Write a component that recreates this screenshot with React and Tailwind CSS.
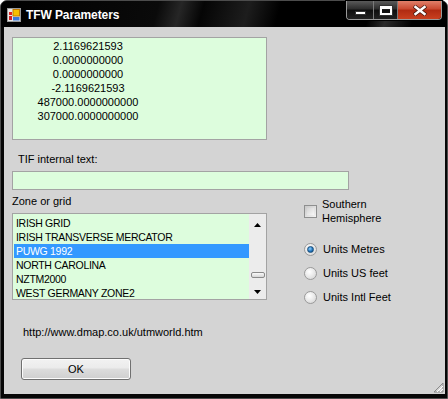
import React from "react";

const values = [
  "2.1169621593",
  "0.0000000000",
  "0.0000000000",
  "-2.1169621593",
  "487000.0000000000",
  "307000.0000000000",
];

const zones = [
  "IRISH GRID",
  "IRISH TRANSVERSE MERCATOR",
  "PUWG 1992",
  "NORTH CAROLINA",
  "NZTM2000",
  "WEST GERMANY ZONE2",
];

const AppIcon = () => (
  <svg width="14" height="14" viewBox="0 0 14 14">
    <rect x="0.5" y="0.5" width="13" height="13" fill="#e8e8e8" stroke="#9a9a9a" />
    <rect x="6" y="1.5" width="6.5" height="6.5" fill="#f6c000" stroke="#c07a00" />
    <rect x="2" y="4" width="3" height="3" fill="#e02020" />
    <rect x="2" y="8" width="3" height="4" fill="#d02020" />
    <rect x="6" y="9" width="6.5" height="3.5" fill="#3a78d8" />
  </svg>
);

const TitleBar = () => (
  <div className="h-[26px] flex items-start rounded-t-[6px] bg-[linear-gradient(105deg,#000_0%,#0a0a0a_35%,#262626_40%,#050505_45%,#1d1d1d_55%,#000_62%,#000_82%,#2a2a2a_86%,#000_92%)]">
    <div className="pl-[6px] pt-[7px] flex items-center">
      <AppIcon />
      <span className="ml-[5px] text-[12px] font-bold text-white leading-[14px] tracking-[-0.1px]">
        TFW Parameters
      </span>
    </div>
    <div className="flex-1" />
    <div className="mr-[5px] flex h-[19px] border border-t-0 border-[#9a9a9a] rounded-b-[4px] overflow-hidden shadow-[0_0_0_1px_#000]">
      <div className="w-[27px] flex items-center justify-center bg-[linear-gradient(#5a5a5a,#2c2c2c_45%,#0e0e0e_50%,#222)] border-r border-[#7a7a7a]">
        <div className="mt-[5px] w-[11px] h-[4px] bg-white border border-[#333]" />
      </div>
      <div className="w-[24px] flex items-center justify-center bg-[linear-gradient(#5a5a5a,#2c2c2c_45%,#0e0e0e_50%,#222)] border-r border-[#7a7a7a]">
        <div className="w-[12px] h-[9px] border-2 border-t-[3px] border-white shadow-[0_0_0_1px_#333]" />
      </div>
      <div className="w-[43px] flex items-center justify-center bg-[linear-gradient(#e0806a,#c9482f_45%,#b02a12_50%,#c9401f)]">
        <svg width="14" height="11" viewBox="0 0 14 11">
          <path d="M1 1 L13 10 M13 1 L1 10" stroke="#4a1a10" strokeWidth="4" />
          <path d="M1.5 1.2 L12.5 9.8 M12.5 1.2 L1.5 9.8" stroke="#fff" strokeWidth="2.4" />
        </svg>
      </div>
    </div>
  </div>
);

const Radio = ({ checked }) => (
  <div className="w-[13px] h-[13px] rounded-full border border-[#9a9a9a] bg-[radial-gradient(circle_at_40%_35%,#ffffff,#e6e6e6_55%,#cfcfcf)] flex items-center justify-center">
    {checked && (
      <div className="w-[7px] h-[7px] rounded-full border border-[#1c4f7a] bg-[radial-gradient(circle_at_40%_35%,#8fd0ff,#1b6fb8_60%,#0c3f6e)]" />
    )}
  </div>
);

const RadioRow = ({ checked, label }) => (
  <div className="flex items-center h-[14px]">
    <Radio checked={checked} />
    <span className="ml-[6px]">{label}</span>
  </div>
);

const Scrollbar = () => (
  <div className="w-[17px] bg-[#ececec] flex flex-col items-center">
    <svg className="mt-[9px]" width="7" height="4" viewBox="0 0 7 4">
      <path d="M3.5 0 L7 4 L0 4 Z" fill="#000" />
    </svg>
    <div className="flex-1" />
    <div className="w-[14px] h-[6px] rounded-[2px] border border-[#8a8a8a] bg-[linear-gradient(#fafafa,#d6d6d6)]" />
    <svg className="mt-[12px] mb-[5px]" width="7" height="4" viewBox="0 0 7 4">
      <path d="M0 0 L7 0 L3.5 4 Z" fill="#000" />
    </svg>
  </div>
);

export default function App() {
  return (
    <div className="w-[448px] h-[399px] flex flex-col bg-[#070707] border border-[#4c4c4c] rounded-t-[7px] font-['Liberation_Sans',Arial,sans-serif] text-[11px] leading-[14px] text-black">
      <TitleBar />
      <div className="relative flex-1 ml-[3px] mr-[2px] mb-[4px] bg-[#d4d4d4] flex flex-col pl-[8px] pt-[10px]">
        <div className="w-[255px] h-[103px] bg-[#ddfddd] border border-[#a3a3a3] pt-[1px]">
          <div className="w-[150px] text-center">
            {values.map((v, i) => (
              <div key={i}>{v}</div>
            ))}
          </div>
        </div>

        <div className="mt-[12px] ml-[6px]">TIF internal text:</div>
        <div className="mt-[5px] w-[337px] h-[19px] bg-[#ddfddd] border border-[#a3a3a3]" />

        <div className="flex mt-[4px]">
          <div className="flex flex-col w-[255px]">
            <div>Zone or grid</div>
            <div className="mt-[5px] h-[87px] bg-[#ddfddd] border border-[#a3a3a3] flex">
              <div className="flex-1 pt-[2px] pl-[1px]">
                {zones.map((z, i) => (
                  <div
                    key={i}
                    className={
                      i === 2
                        ? "h-[14px] pl-[2px] bg-[#3399ff] text-white text-[10.5px] tracking-[-0.3px]"
                        : "h-[14px] pl-[2px] text-[10.5px] tracking-[-0.3px]"
                    }
                  >
                    {z}
                  </div>
                ))}
              </div>
              <Scrollbar />
            </div>
            <div className="mt-[25px] ml-[11px]">http://www.dmap.co.uk/utmworld.htm</div>
            <button className="mt-[19px] ml-[9px] w-[110px] h-[22px] rounded-[3px] border border-[#707070] bg-[linear-gradient(#f2f2f2,#ebebeb_45%,#dddddd_50%,#cfcfcf)] shadow-[inset_0_0_0_1px_#fcfcfc] text-[11px]">
              OK
            </button>
          </div>

          <div className="ml-[37px] flex flex-col">
            <div className="mt-[3px] flex items-center">
              <div className="w-[13px] h-[13px] border border-[#8e8f8f] bg-[linear-gradient(135deg,#c8c8c8,#f4f4f4)] p-[2px]">
                <div className="w-full h-full bg-[linear-gradient(135deg,#d4d4d4,#f7f7f7)]" />
              </div>
              <div className="ml-[5px]">
                <div>Southern</div>
                <div>Hemisphere</div>
              </div>
            </div>
            <div className="mt-[17px] flex flex-col gap-[10px]">
              <RadioRow checked label="Units Metres" />
              <RadioRow label="Units US feet" />
              <RadioRow label="Units Intl Feet" />
            </div>
          </div>
        </div>

        <svg className="absolute right-[1px] bottom-[1px]" width="11" height="11" viewBox="0 0 11 11">
          <path d="M10 1 L10 10 L1 10 Z" fill="none" stroke="#8a8a8a" />
          <path d="M10 4 L4 10 M10 7 L7 10" stroke="#ffffff" />
        </svg>
      </div>
    </div>
  );
}
